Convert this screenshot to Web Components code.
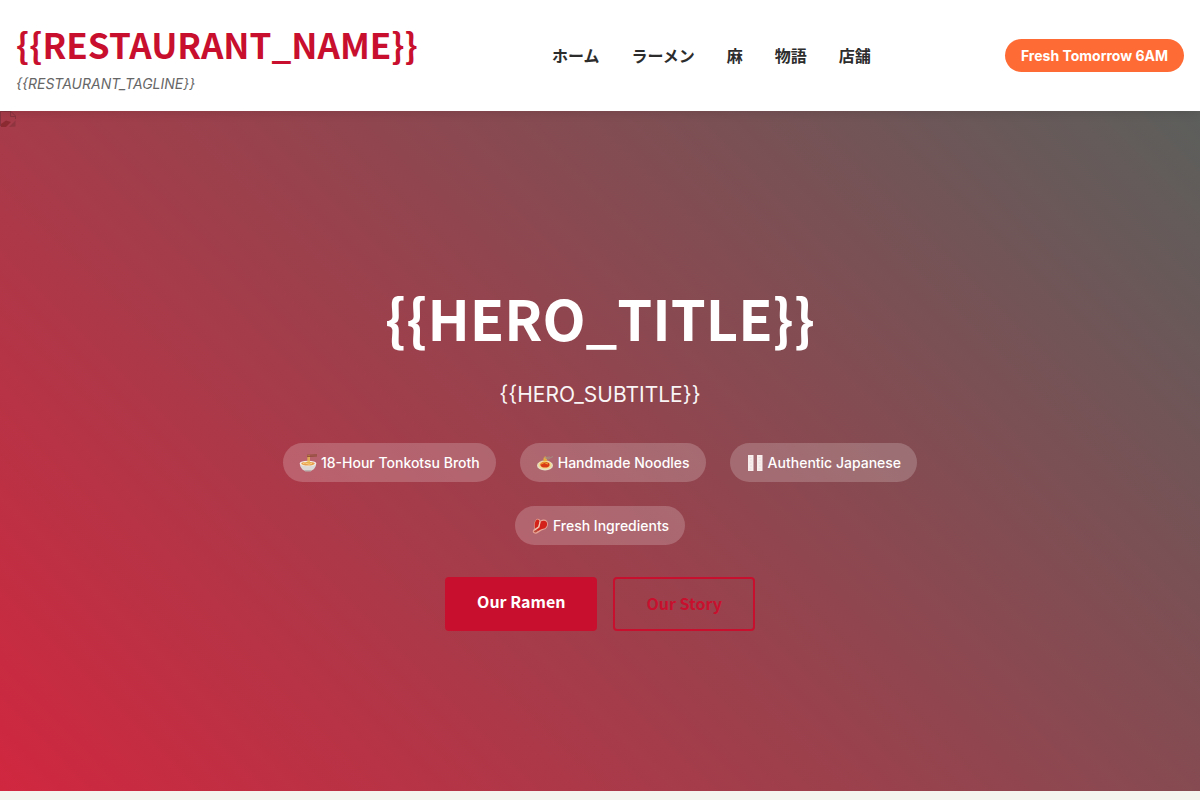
<!DOCTYPE html>
<html lang="ja">
<head>
<meta charset="utf-8">
<meta name="viewport" content="width=device-width, initial-scale=1">
<title>{{RESTAURANT_NAME}}</title>
<style>
  :root {
    --red: #c8102e;
    --orange: #ff6b35;
    --ink: #2c2c2c;
    --muted: #666;
    --paper: #f5f5f0;
    --display: "Noto Sans CJK JP", "Noto Sans", sans-serif;
    --body: Inter, "Noto Sans CJK JP", sans-serif;
  }
  body { margin: 0; background: var(--paper); color: var(--ink); font: 16px/1.6 var(--body); }
</style>
</head>
<body>
<site-header>
  <site-brand slot="brand">{{RESTAURANT_NAME}}<span slot="tagline">{{RESTAURANT_TAGLINE}}</span></site-brand>
  <nav-item href="#home">ホーム</nav-item>
  <nav-item href="#ramen">ラーメン</nav-item>
  <nav-item href="#noodles">麻</nav-item>
  <nav-item href="#story">物語</nav-item>
  <nav-item href="#locations">店舗</nav-item>
  <status-badge slot="status">Fresh Tomorrow 6AM</status-badge>
</site-header>
<main>
  <hero-banner>
    <span slot="title">{{HERO_TITLE}}</span>
    <span slot="subtitle">{{HERO_SUBTITLE}}</span>
    <feature-chip slot="features" icon="ramen">18-Hour Tonkotsu Broth</feature-chip>
    <feature-chip slot="features" icon="pasta">Handmade Noodles</feature-chip>
    <feature-chip slot="features" icon="flag">Authentic Japanese</feature-chip>
    <feature-chip slot="features" icon="meat">Fresh Ingredients</feature-chip>
    <action-button slot="actions">Our Ramen</action-button>
    <action-button slot="actions" variant="outline">Our Story</action-button>
  </hero-banner>
</main>
<script>
const define = (name, html, setup) => {
  const template = document.createElement('template');
  template.innerHTML = html;
  customElements.define(name, class extends HTMLElement {
    constructor() {
      super();
      this.attachShadow({ mode: 'open' }).append(template.content.cloneNode(true));
    }
    connectedCallback() { if (setup) setup(this, this.shadowRoot); }
  });
};

define('site-header', `
  <style>
    :host { display: block; position: relative; z-index: 1; background: #fff; box-shadow: 0 2px 10px rgba(0,0,0,.1); }
    header { display: flex; flex-wrap: wrap; align-items: center; justify-content: space-between; gap: 16px; max-width: 1200px; margin: 0 auto; padding: 16px; box-sizing: border-box; }
    nav { display: flex; flex-wrap: wrap; gap: 32px; padding-bottom: 2px; }
  </style>
  <header><slot name="brand"></slot><nav><slot></slot></nav><slot name="status"></slot></header>`);

define('site-brand', `
  <style>
    :host { display: block; }
    h1 { margin: 0; color: var(--red); font: 700 35px/56px var(--display); }
    p { margin: 0; color: var(--muted); font-size: 14px; line-height: 23px; font-style: italic; }
  </style>
  <h1><slot></slot></h1><p><slot name="tagline"></slot></p>`);

define('nav-item', `
  <style>
    :host { display: block; }
    a { display: block; color: var(--ink); font: 700 16px/26px var(--display); text-decoration: none; }
    a:hover { color: var(--red); }
  </style>
  <a><slot></slot></a>`,
  (el, root) => { root.querySelector('a').href = el.getAttribute('href'); });

define('status-badge', `
  <style>
    :host { display: block; padding: 5px 16px; border-radius: 20px; background: var(--orange); color: #fff; font-size: 14px; line-height: 23px; font-weight: 700; }
  </style>
  <slot></slot>`);

define('hero-banner', `
  <style>
    :host { display: flex; align-items: center; justify-content: center; position: relative; min-height: 85vh; box-sizing: border-box;
      background: linear-gradient(45deg, #d0273f, #5c5f5c); color: #fff; text-align: center; }
    .missing { position: absolute; top: 0; left: 0; }
    section { width: 100%; max-width: 800px; }
    h2 { margin: 0 0 16px; font: 700 56px/91px var(--display); }
    p { margin: 0 0 32px; font-size: 21px; line-height: 33px; opacity: .95; }
    .features { display: flex; flex-wrap: wrap; justify-content: center; gap: 24px; margin-bottom: 32px; }
    .actions { display: flex; flex-wrap: wrap; justify-content: center; gap: 16px; }
  </style>
  <svg class="missing" width="16" height="16" viewBox="0 0 16 16" aria-hidden="true">
    <path d="M.5 15V.5H11L15.5 5V8" fill="none" stroke="#87333f"/>
    <path d="M10.500 .5V5.500H15.500" fill="none" stroke="#87333f"/>
    <path d="M1 15.500V13L6 9.500L11 11L6 16H1Z" fill="#8b2b31"/>
    <path d="M9 16L15.500 9.500V15.500Z" fill="#8f3540"/>
  </svg>
  <section>
    <h2><slot name="title"></slot></h2>
    <p><slot name="subtitle"></slot></p>
    <div class="features"><slot name="features"></slot></div>
    <div class="actions"><slot name="actions"></slot></div>
  </section>`);

const icons = {
  ramen: `<path d="M.8 9.500C1 14 4 16.200 5.800 16.700H12.200C14.500 16 17 13.500 17.200 9.500Z" fill="#ddd9d6"/>
    <path d="M5.500 16h7l-.7 1.500H6.200Z" fill="#b9b2b0"/>
    <ellipse cx="9" cy="9.500" rx="8.300" ry="2.700" fill="#f4eee8"/>
    <ellipse cx="9" cy="9.600" rx="6.800" ry="1.900" fill="#e9a04e"/>
    <path d="M4 9.500q2-1.500 4 0t5-.3" stroke="#f9d98b" fill="none"/>
    <path d="M9 1V9.500M10.300 1V9" stroke="#e9bd52" stroke-width="1.100"/>
    <path d="M8 1.200L18 .8M8 2.600L18 2" stroke="#8b4a32" stroke-width=".9"/>`,
  pasta: `<ellipse cx="9" cy="11.500" rx="8" ry="5" fill="#e6dfc4"/>
    <ellipse cx="9" cy="11" rx="6.600" ry="3.900" fill="#f5d88a"/>
    <ellipse cx="9" cy="10.700" rx="4.600" ry="2.800" fill="#d93a16"/>
    <path d="M5 10q3-3 7 0" stroke="#efac36" fill="none"/>
    <path d="M7.500 7.500Q7 3 9 2.500T11 7Z" fill="#e8ad42"/>
    <path d="M8.500 3.500L12 5L17 2.500M10 3.500L14 3" stroke="#a18d80" fill="none"/>`,
  flag: `<path d="M2 1H7.500V17H2ZM11 1H16.500V17H11Z" fill="#f8eeee"/>
    <path d="M3.500 3.500h2M4 6h2M3.500 9h2M4 12h2M3.500 15h2M12.500 3.500h2M13 6h2M12.500 9h2M13 12h2M12.500 15h2" stroke="#e6dadc" stroke-width=".8"/>`,
  meat: `<path d="M5.500 2Q8 .8 9.500 3.500Q13 1.500 16 4Q18.500 8.500 14.500 12Q10 13 7.500 15.500Q4 18 1.800 15.200Q1.500 13 3.500 11.500Q2.500 5 5.500 2Z" fill="#e8a595"/>
    <path d="M5.500 2.800Q7.800 1.500 8.500 4.500L7.200 9.500L4 11.500Q3 5.500 5.500 2.800ZM9.700 4.500Q13.500 2.800 15.600 5Q17.200 8.500 14 11.200Q10 12 7 14L5 13L8.500 10.500Z" fill="#d2221a"/>
    <path d="M2.700 14.800Q5 16.800 7.300 13.500L5 12.500Z" fill="#b94a3c"/>
    <path d="M9 4.500L8 9.500L4 13" stroke="#f3c9b5" fill="none"/>`
};

define('feature-chip', `
  <style>
    :host { display: flex; align-items: center; gap: 4px; padding: 8px 16px; border-radius: 25px; background: rgba(255,255,255,.2); font-size: 14px; line-height: 23px; font-weight: 500; }
    svg { display: block; width: 18px; height: 18px; }
  </style>
  <svg viewBox="0 0 18 18" aria-hidden="true"></svg><span><slot></slot></span>`,
  (el, root) => { root.querySelector('svg').innerHTML = icons[el.getAttribute('icon')]; });

define('action-button', `
  <style>
    :host { display: flex; }
    button { display: block; margin: 0; padding: 11px 32px 17px; border: 0; border-radius: 4px; background: var(--red); color: #fff; font: 700 16px/26px var(--display); cursor: pointer; }
    :host([variant="outline"]) button { padding: 11px 31px 13px; border: 2px solid var(--red); background: transparent; color: var(--red); }
  </style>
  <button type="button"><slot></slot></button>`);
</script>
</body>
</html>
